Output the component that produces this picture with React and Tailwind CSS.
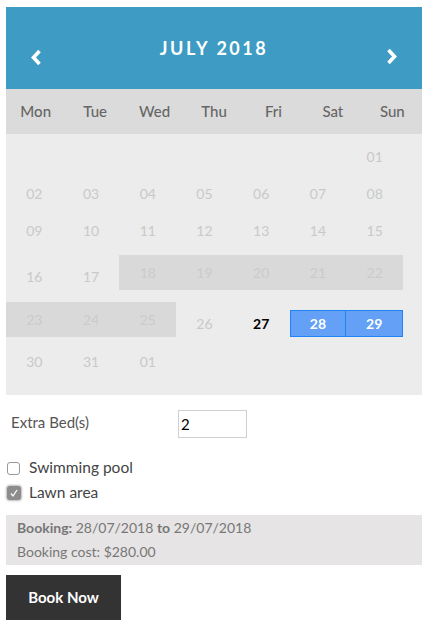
import React from "react";

const font = { fontFamily: "Lato, 'Open Sans', sans-serif" };

function Cell({ children, cls = "" }) {
  return <div className={`flex items-center justify-center ${cls}`}>{children}</div>;
}

export default function App() {
  const days = ["Mon", "Tue", "Wed", "Thu", "Fri", "Sat", "Sun"];
  const dim = "text-[#c9c9c9]";
  const dimH = "text-[#cbcbcb]";
  const simpleRow = (arr) => (
    <div className="grid grid-cols-7 h-[37px]">
      {arr.map((d, i) => (
        <Cell key={i} cls={`h-[37px] text-[14px] ${dim}`}>{d}</Cell>
      ))}
    </div>
  );
  return (
    <div className="w-[427px] h-[626px] bg-white pt-[7px] px-[6px]" style={font}>
      <div className="w-[416px]">
        <div className="h-[82px] bg-[#3e9bc3] flex items-start justify-between px-[24px] relative">
          <svg className="mt-[42px]" width="13" height="17" viewBox="0 0 13 17">
            <polyline points="9.5,2 3.5,8.5 9.5,15" fill="none" stroke="white" strokeWidth="3.6" />
          </svg>
          <div className="absolute left-0 right-0 top-[29px] text-center text-white text-[18px] font-bold tracking-[2.5px] leading-[24px]">
            JULY 2018
          </div>
          <svg className="mt-[41px]" width="13" height="17" viewBox="0 0 13 17">
            <polyline points="3.5,2 9.5,8.5 3.5,15" fill="none" stroke="white" strokeWidth="3.6" />
          </svg>
        </div>
        <div className="h-[45px] bg-[#dbdbdb] grid grid-cols-7">
          {days.map((d) => (
            <div key={d} className="flex items-center justify-center text-[15px] text-[#666] font-medium">
              {d}
            </div>
          ))}
        </div>
        <div className="bg-[#ececec] h-[261px] pt-[4px]">
          <div className="w-[397px]">
            {simpleRow(["", "", "", "", "", "", "01"])}
            {simpleRow(["02", "03", "04", "05", "06", "07", "08"])}
            {simpleRow(["09", "10", "11", "12", "13", "14", "15"])}
            <div className="grid grid-cols-7 h-[47px] items-start">
              <Cell cls={`h-[35px] mt-[10px] text-[14px] ${dim}`}>16</Cell>
              <Cell cls={`h-[35px] mt-[10px] text-[14px] ${dim}`}>17</Cell>
              {["18", "19", "20", "21", "22"].map((d) => (
                <Cell key={d} cls={`h-[35px] mt-[6px] bg-[#d9d9d9] text-[14px] ${dimH}`}>{d}</Cell>
              ))}
            </div>
            <div className="grid grid-cols-7 h-[47px] items-start">
              {["23", "24", "25"].map((d) => (
                <Cell key={d} cls={`h-[35px] mt-[6px] bg-[#d9d9d9] text-[14px] ${dimH}`}>{d}</Cell>
              ))}
              <Cell cls={`h-[27px] mt-[14px] text-[14px] ${dim}`}>26</Cell>
              <Cell cls="h-[27px] mt-[14px] text-[14px] font-bold text-black">27</Cell>
              <Cell cls="h-[27px] mt-[14px] text-[14px] font-bold text-white bg-[#64a0f6] border border-[#1f84fa]">28</Cell>
              <Cell cls="h-[27px] mt-[14px] text-[14px] font-bold text-white bg-[#64a0f6] border border-[#1f84fa] border-l-0">29</Cell>
            </div>
            {simpleRow(["30", "31", "01", "", "", "", ""])}
          </div>
        </div>
      </div>

      <div className="flex items-start mt-[15px] h-[44px]">
        <div className="w-[172px] pl-[5px] text-[15px] text-[#555] pt-[1px]">Extra Bed(s)</div>
        <div className="w-[69px] h-[28px] border border-[#d0d0d0] flex items-center pl-[2px] text-[15px] text-black">2</div>
      </div>
      <div className="flex items-center h-[20px] mt-[4px]">
        <div className="w-[13px] h-[13px] border border-[#999] rounded-[3px] ml-[1px] bg-white" />
        <span className="ml-[9px] text-[15.5px] text-[#444]">Swimming pool</span>
      </div>
      <div className="flex items-center h-[20px] mt-[5px]">
        <div className="w-[14px] h-[14px] ml-[1px] rounded-[3px] bg-[#8c8c8c] shadow-[0_0_2px_1px_#bbb] flex items-center justify-center">
          <svg width="10" height="10" viewBox="0 0 10 10">
            <polyline points="2,5.5 4,8 8,2" fill="none" stroke="white" strokeWidth="1.3" />
          </svg>
        </div>
        <span className="ml-[8px] text-[15.5px] text-[#444]">Lawn area</span>
      </div>
      <div className="mt-[12px] w-[416px] h-[50px] bg-[#e6e4e4] pl-[11px] pt-[1px] text-[14px] text-[#777] leading-[24px]">
        <div>
          <span className="font-bold">Booking:</span> 28/07/2018 <span className="font-bold">to</span> 29/07/2018
        </div>
        <div>Booking cost: $280.00</div>
      </div>
      <button className="mt-[10px] w-[115px] h-[45px] bg-[#333] text-white text-[15px] font-bold" style={font}>
        Book Now
      </button>
    </div>
  );
}
